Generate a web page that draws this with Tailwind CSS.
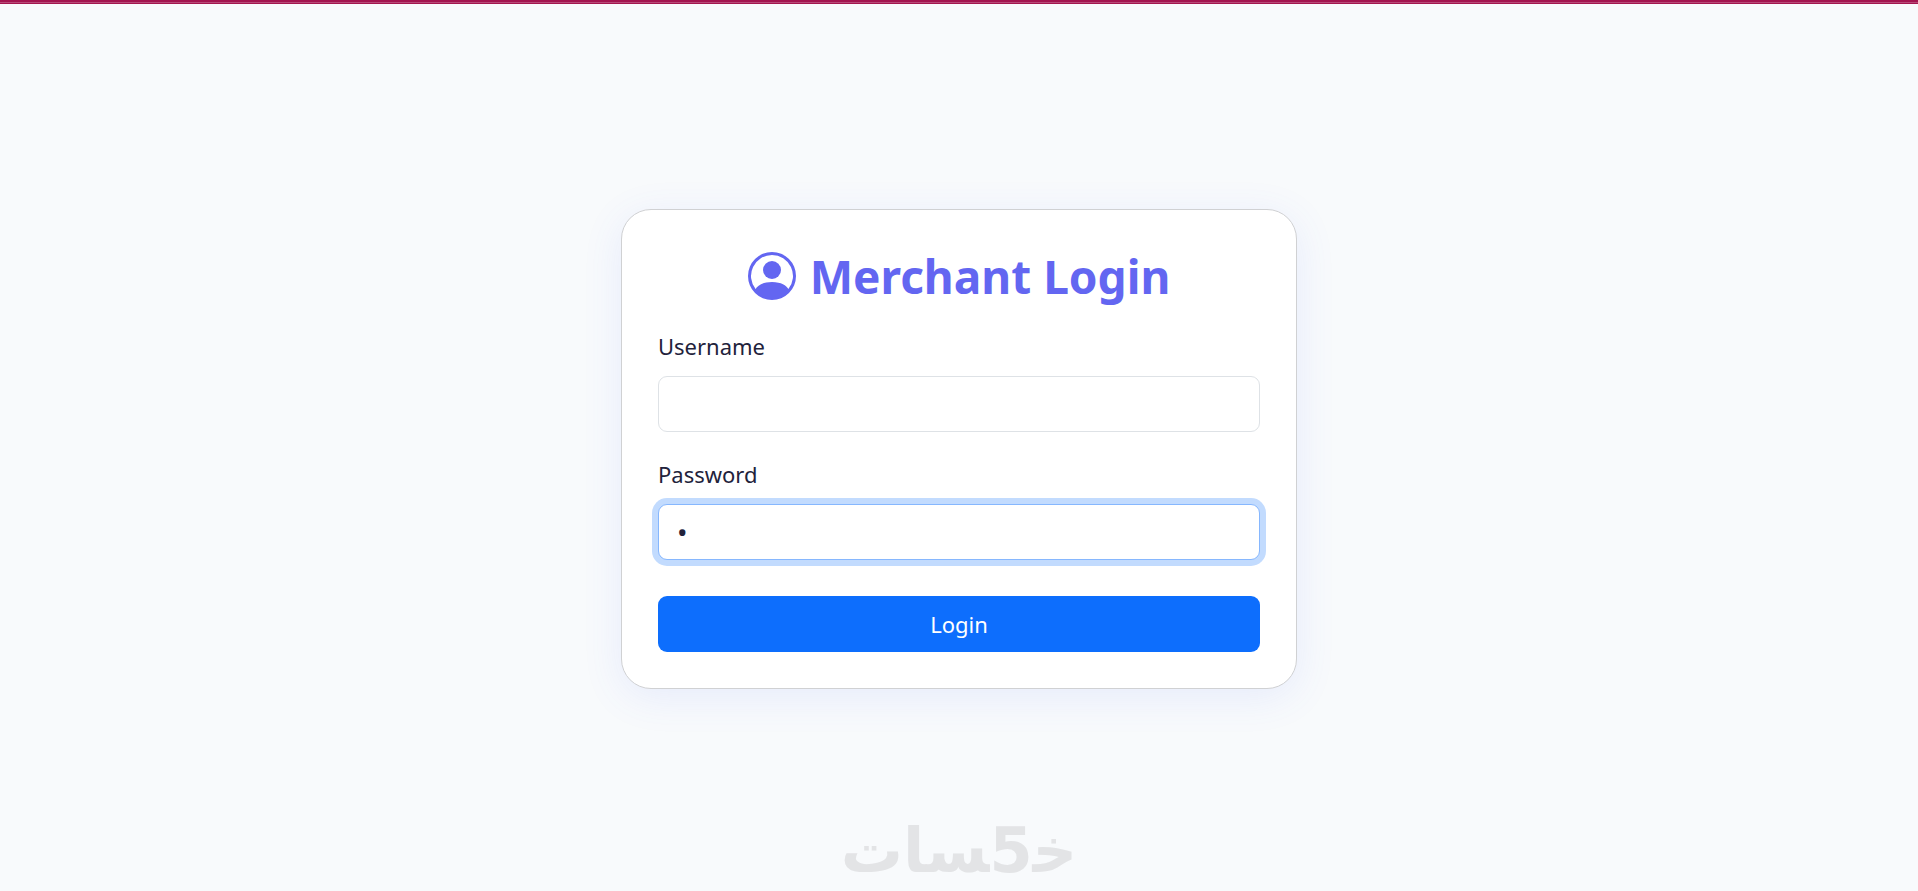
<!DOCTYPE html>
<html lang="en">
<head>
    <meta charset="UTF-8">
    <meta name="viewport" content="width=device-width, initial-scale=1.0">
    <title>Merchant Login</title>
    <!-- Tailwind CSS CDN -->
    <script src="https://cdn.jsdelivr.net/npm/@tailwindcss/browser@4"></script>
</head>
<body class="flex flex-col min-h-screen bg-[#f8fafc] text-[22px] leading-9 text-[#22223b] font-['Segoe_UI','Noto_Sans',sans-serif]">
    <!-- Top accent line -->
    <div class="h-1 bg-[#a3154f] border-t-2 border-b border-[#a3154f]">
        <div class="h-px bg-[#b84a78]"></div>
    </div>

    <!-- Login card -->
    <main class="flex flex-1 items-center justify-center px-4 pt-0.5">
        <div class="w-full max-w-[676px] p-9 bg-white border border-[#d0d1d3] rounded-[30px] shadow-[0_8px_40px_rgba(80,110,241,0.1)]">
            <h1 class="flex items-center justify-center gap-3.5 mb-[22px] text-[46px] leading-[60px] font-bold text-[#6366f1]">
                <svg class="size-12" viewBox="0 0 16 16" fill="currentColor" aria-hidden="true">
                    <path d="M11 6a3 3 0 1 1-6 0 3 3 0 0 1 6 0"/>
                    <path fill-rule="evenodd" d="M0 8a8 8 0 1 1 16 0A8 8 0 0 1 0 8m8-7a7 7 0 0 0-5.468 11.37C3.242 11.226 4.805 10 8 10s4.757 1.225 5.468 2.37A7 7 0 0 0 8 1"/>
                </svg>
                Merchant Login
            </h1>
            <form>
                <div class="mb-6">
                    <label for="username" class="block mb-3">Username</label>
                    <input id="username" type="text" class="block w-full h-14 px-[18px] bg-white border border-[#dee2e6] rounded-[9px] outline-none">
                </div>
                <div class="mb-9">
                    <label for="password" class="block mb-3">Password</label>
                    <input id="password" type="password" value="1" class="block w-full h-14 px-[18px] text-[28px] bg-white border border-[#86b7fe] rounded-[9px] outline-none ring-6 ring-[#c2dbfe]">
                </div>
                <button type="submit" class="block w-full h-14 bg-[#0d6efd] text-white rounded-[9px]">Login</button>
            </form>
        </div>
    </main>

    <!-- Watermark -->
    <div class="absolute bottom-0 inset-x-0 flex justify-center text-[#e3e4e6]" aria-hidden="true">
        <div dir="rtl" lang="ar" class="flex items-center h-20 text-[62px] leading-none font-bold font-['DejaVu_Sans',sans-serif]"><span>خ&zwj;</span><span>5</span><span>&zwj;سات</span></div>
    </div>
</body>
</html>
